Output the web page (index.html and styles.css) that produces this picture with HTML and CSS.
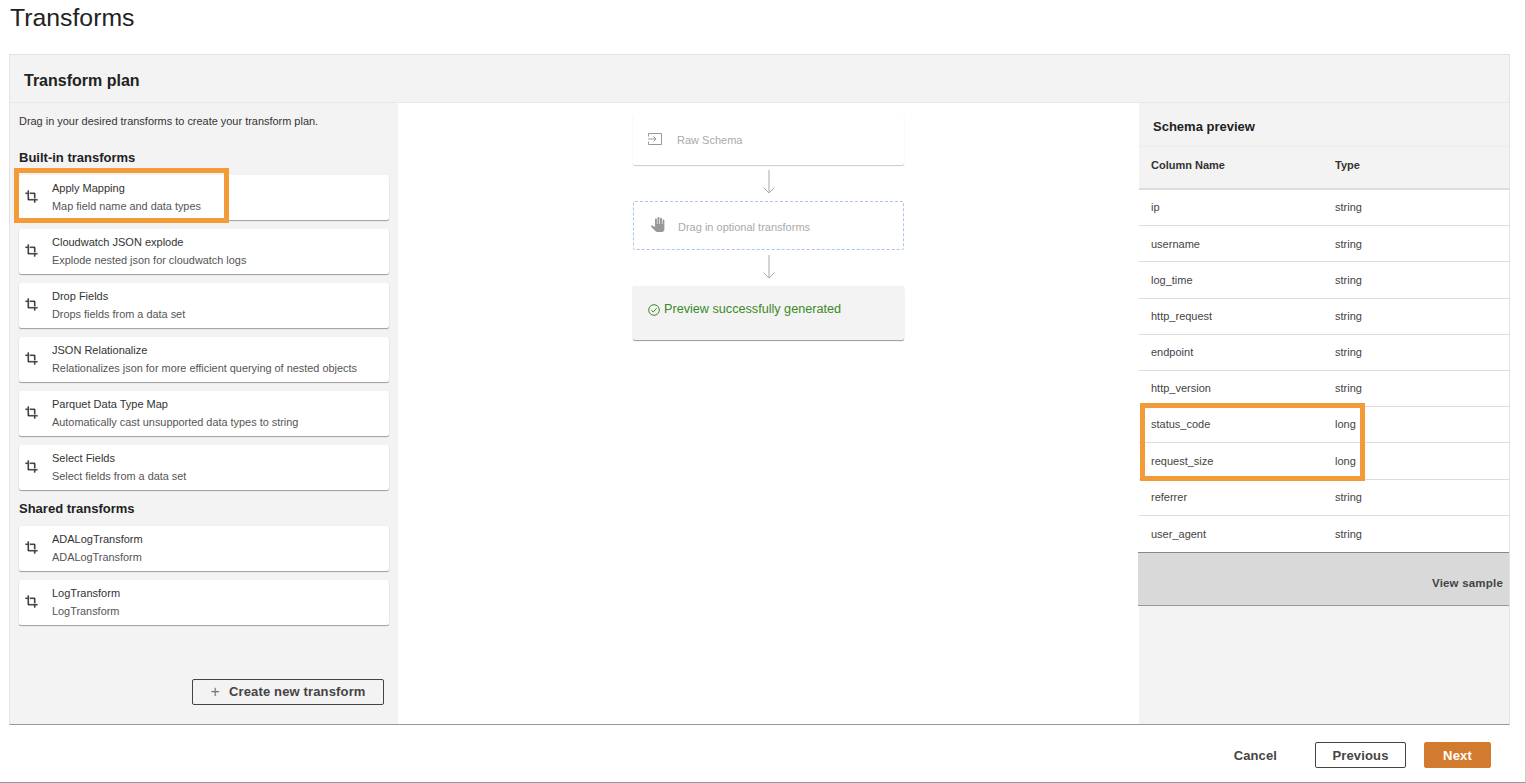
FILE: index.html
```html
<!DOCTYPE html>
<html lang="en">
<head>
    <meta charset="UTF-8">
    <meta name="viewport" content="width=device-width, initial-scale=1.0">
    <title>Transforms</title>
    <link rel="stylesheet" href="styles.css">
</head>
<body>
    <svg class="defs" width="0" height="0">
        <symbol id="crop" viewBox="0 0 24 24"><path d="M17 15h2V7c0-1.1-.9-2-2-2H9v2h8v8zM7 17V1H5v4H1v2h4v10c0 1.1.9 2 2 2h10v4h2v-4h4v-2H7z"/></symbol>
        <symbol id="arrow" viewBox="0 0 14 24"><path d="M7 0v23M1.500 17.500 7 23l5.500-5.500" fill="none" stroke="currentColor" stroke-width="1"/></symbol>
    </svg>
    <h1 class="page-title">Transforms</h1>

    <section class="panel">
        <h2 class="panel-title">Transform plan</h2>
        <div class="panel-body">
            <!-- transform list -->
            <aside class="left">
                <p class="intro">Drag in your desired transforms to create your transform plan.</p>
                <h3 class="group-title">Built-in transforms</h3>
                <div class="card-list">
                    <div class="card">
                        <svg class="crop-icon"><use href="#crop"/></svg>
                        <div class="card-text"><div class="card-name">Apply Mapping</div><div class="card-desc">Map field name and data types</div></div>
                        <div class="highlight highlight-card"></div>
                    </div>
                    <div class="card">
                        <svg class="crop-icon"><use href="#crop"/></svg>
                        <div class="card-text"><div class="card-name">Cloudwatch JSON explode</div><div class="card-desc">Explode nested json for cloudwatch logs</div></div>
                    </div>
                    <div class="card">
                        <svg class="crop-icon"><use href="#crop"/></svg>
                        <div class="card-text"><div class="card-name">Drop Fields</div><div class="card-desc">Drops fields from a data set</div></div>
                    </div>
                    <div class="card">
                        <svg class="crop-icon"><use href="#crop"/></svg>
                        <div class="card-text"><div class="card-name">JSON Relationalize</div><div class="card-desc">Relationalizes json for more efficient querying of nested objects</div></div>
                    </div>
                    <div class="card">
                        <svg class="crop-icon"><use href="#crop"/></svg>
                        <div class="card-text"><div class="card-name">Parquet Data Type Map</div><div class="card-desc">Automatically cast unsupported data types to string</div></div>
                    </div>
                    <div class="card">
                        <svg class="crop-icon"><use href="#crop"/></svg>
                        <div class="card-text"><div class="card-name">Select Fields</div><div class="card-desc">Select fields from a data set</div></div>
                    </div>
                </div>
                <h3 class="group-title group-shared">Shared transforms</h3>
                <div class="card-list">
                    <div class="card">
                        <svg class="crop-icon"><use href="#crop"/></svg>
                        <div class="card-text"><div class="card-name">ADALogTransform</div><div class="card-desc">ADALogTransform</div></div>
                    </div>
                    <div class="card">
                        <svg class="crop-icon"><use href="#crop"/></svg>
                        <div class="card-text"><div class="card-name">LogTransform</div><div class="card-desc">LogTransform</div></div>
                    </div>
                </div>
                <button class="btn btn-create"><span class="plus">+</span>Create new transform</button>
            </aside>

            <!-- plan canvas -->
            <main class="canvas">
                <div class="step step-raw">
                    <svg class="step-icon" viewBox="0 0 14 12"><path d="M.5 3.500V.5h13v11H.5V8.500M0 6h7.500M5.500 3.500 8 6 5.500 8.500" fill="none" stroke="currentColor"/></svg>
                    <span>Raw Schema</span>
                </div>
                <svg class="step-arrow"><use href="#arrow"/></svg>
                <div class="step step-drop">
                    <svg class="hand-icon" viewBox="0 0 24 24"><path d="M23 5.500V20c0 2.200-1.800 4-4 4h-7.300c-1.080 0-2.100-.43-2.850-1.190L1 14.830s1.260-1.230 1.300-1.250c.22-.19.49-.29.79-.29.22 0 .42.06.6.16.04.01 4.310 2.460 4.310 2.460V4c0-.83.67-1.500 1.500-1.500S11 3.170 11 4v7h1V1.500c0-.83.67-1.500 1.500-1.500S15 .67 15 1.500V11h1V2.500c0-.83.67-1.500 1.500-1.500s1.500.67 1.500 1.500V11h1V5.500c0-.83.67-1.500 1.500-1.500s1.500.67 1.500 1.500z"/></svg>
                    <span>Drag in optional transforms</span>
                </div>
                <svg class="step-arrow"><use href="#arrow"/></svg>
                <div class="step-preview">
                    <svg class="check-icon" viewBox="0 0 12 12"><circle cx="6" cy="6" r="5.300" fill="none" stroke="currentColor"/><path d="M3.300 6.200 5.200 8l3.500-3.700" fill="none" stroke="currentColor"/></svg>
                    <span>Preview successfully generated</span>
                </div>
            </main>

            <!-- schema -->
            <aside class="schema">
                <h3 class="schema-title">Schema preview</h3>
                <div class="schema-head">
                    <div>Column Name</div>
                    <div>Type</div>
                </div>
                <div class="schema-rows">
                    <div class="row"><div>ip</div><div>string</div></div>
                    <div class="row"><div>username</div><div>string</div></div>
                    <div class="row"><div>log_time</div><div>string</div></div>
                    <div class="row"><div>http_request</div><div>string</div></div>
                    <div class="row"><div>endpoint</div><div>string</div></div>
                    <div class="row"><div>http_version</div><div>string</div></div>
                    <div class="row row-marked"><div>status_code</div><div>long</div><div class="highlight highlight-rows"></div></div>
                    <div class="row"><div>request_size</div><div>long</div></div>
                    <div class="row"><div>referrer</div><div>string</div></div>
                    <div class="row"><div>user_agent</div><div>string</div></div>
                </div>
                <div class="sample-bar">View sample</div>
            </aside>
        </div>
    </section>

    <footer class="actions">
        <button class="btn-link">Cancel</button>
        <button class="btn btn-prev">Previous</button>
        <button class="btn btn-next">Next</button>
    </footer>
</body>
</html>
```

FILE: styles.css
```css
:root {
    --panel: #f3f3f3;
    --line: #e2e2e2;
    --orange: #f39c37;
    --text: #333;
}
* {
    box-sizing: border-box;
}
html, body {
    height: 100%;
}
body {
    margin: 0;
    width: 1526px;
    height: 783px;
    background: #fff;
    color: var(--text);
    font-family: "Liberation Sans", Arial, sans-serif;
    overflow: hidden;
    border-right: 1px solid #ccc;
    border-bottom: 1px solid #999;
    display: flex;
    flex-direction: column;
}
.defs {
    position: absolute;
}
.page-title {
    margin: 0;
    padding: 3px 0 0 10px;
    height: 54px;
    font-size: 24.8px;
    line-height: 30px;
    font-weight: 400;
    color: #222;
}
.panel {
    margin-left: 9px;
    width: 1501px;
    height: 671px;
    display: flex;
    flex-direction: column;
    background: var(--panel);
    border: 1px solid var(--line);
    border-bottom: 1px solid #999;
}
.panel-title {
    margin: 0;
    height: 48px;
    padding-left: 14px;
    font-size: 16px;
    line-height: 51px;
    color: #222;
    border-bottom: 1px solid #e8e8e8;
}
.panel-body {
    flex: 1;
    display: flex;
    min-height: 0;
}

/* left column */
.left {
    width: 388px;
    padding: 0 9px;
    display: flex;
    flex-direction: column;
}
.intro {
    margin: 11px 0 0;
    font-size: 10.95px;
    line-height: 14px;
}
.group-title {
    margin: 22px 0 0;
    height: 25px;
    font-size: 13px;
    line-height: 16px;
    color: #222;
}
.group-shared {
    margin-top: 11px;
}
.card-list {
    display: flex;
    flex-direction: column;
    gap: 9px;
}
.card {
    position: relative;
    height: 45px;
    display: flex;
    align-items: center;
    background: #fff;
    border-radius: 2px;
    box-shadow: 0 1px 1px rgba(0, 0, 0, 0.35), 0 0 1px rgba(0, 0, 0, 0.1);
}
.crop-icon {
    width: 13px;
    height: 13px;
    margin: -3px 0 0 6px;
    fill: #222;
    stroke: #222;
    stroke-width: 0.5;
}
.card-text {
    margin: -2px 0 0 14px;
    font-size: 11px;
    line-height: 14px;
}
.card-name {
    color: #333;
}
.card-desc {
    margin-top: 4px;
    font-size: 10.9px;
    color: #555;
}
.highlight {
    position: absolute;
    border: 5px solid var(--orange);
    pointer-events: none;
    z-index: 2;
}
.highlight-card {
    left: -5px;
    top: -7px;
    width: 215px;
    height: 55px;
}
.highlight-rows {
    left: 1px;
    top: -4px;
    width: 225px;
    height: 78px;
}
.btn {
    height: 26px;
    font-family: inherit;
    font-size: 13px;
    font-weight: 700;
    letter-spacing: 0.15px;
    color: #444;
    background: transparent;
    border: 1px solid #444;
    border-radius: 2px;
    padding: 0;
}
.btn-create {
    margin-top: auto;
    margin-bottom: 19px;
    margin-right: 5px;
    align-self: flex-end;
    width: 192px;
}
.plus {
    font-weight: 400;
    font-size: 16px;
    color: #777;
    margin-right: 9px;
    vertical-align: -1px;
}

/* canvas */
.canvas {
    width: 741px;
    background: #fff;
    display: flex;
    flex-direction: column;
    align-items: center;
    padding-top: 12px;
}
.step, .step-preview {
    width: 271px;
    display: flex;
    align-items: center;
    border-radius: 2px;
    font-size: 11px;
}
.step {
    color: #aaa;
    background: #fff;
}
.step-raw {
    height: 50px;
    padding-left: 15px;
    gap: 15px;
    box-shadow: 0 1px 1px rgba(0, 0, 0, 0.2), 0 0 1px rgba(0, 0, 0, 0.06);
}
.step-icon {
    width: 14px;
    height: 12px;
    margin-top: -3px;
    color: #999;
}
.step-drop {
    height: 49px;
    padding: 3px 0 0 16px;
    gap: 13px;
    border: 1px dashed #a9c4f5;
}
.hand-icon {
    width: 15px;
    height: 15px;
    margin-top: -6px;
    fill: #999;
}
.step-arrow {
    width: 14px;
    height: 24px;
    margin: 5px 0 7px;
    color: #aaa;
}
.step-preview {
    height: 54px;
    padding: 0 0 8px 15px;
    gap: 4px;
    font-size: 12.65px;
    color: #3b8a26;
    background: var(--panel);
    box-shadow: 0 1px 1px rgba(0, 0, 0, 0.4), 0 0 1px rgba(0, 0, 0, 0.1);
}
.check-icon {
    width: 12px;
    height: 12px;
    margin-top: 2px;
}

/* schema */
.schema {
    flex: 1;
    font-size: 11px;
}
.schema-title {
    margin: 0;
    height: 44px;
    padding-left: 14px;
    font-size: 13px;
    line-height: 48px;
    color: #222;
    border-bottom: 1px solid #ececec;
}
.schema-head, .row {
    display: grid;
    grid-template-columns: 184px 1fr;
    padding-left: 12px;
    align-items: center;
}
.schema-head {
    height: 43px;
    padding-bottom: 6px;
    font-weight: 700;
    color: #333;
    border-bottom: 2px solid #ddd;
}
.schema-rows {
    background: #fff;
}
.row {
    position: relative;
    height: 36.2px;
    padding-bottom: 0.5px;
    color: #444;
    border-bottom: 1px solid #ddd;
}
.row:last-child {
    border-bottom: none;
}
.sample-bar {
    height: 54px;
    margin-left: -1px;
    padding: 24px 6px 0 0;
    text-align: right;
    font-size: 11.5px;
    font-weight: 700;
    letter-spacing: 0.2px;
    color: #444;
    background: #d9d9d9;
    border-top: 1px solid #888;
    border-bottom: 1px solid #999;
}

/* footer */
.actions {
    flex: 1;
    display: flex;
    justify-content: flex-end;
    align-items: flex-start;
    padding: 17px 34px 0 0;
}
.btn-link {
    height: 26px;
    margin-right: 38px;
    padding: 0;
    border: none;
    background: none;
    font-family: inherit;
    font-size: 13px;
    font-weight: 700;
    letter-spacing: 0.1px;
    color: #444;
}
.btn-prev {
    width: 91px;
    margin-right: 18px;
}
.btn-next {
    width: 67px;
    color: #fff;
    background: #d27b2e;
    border-color: #d27b2e;
}
```
